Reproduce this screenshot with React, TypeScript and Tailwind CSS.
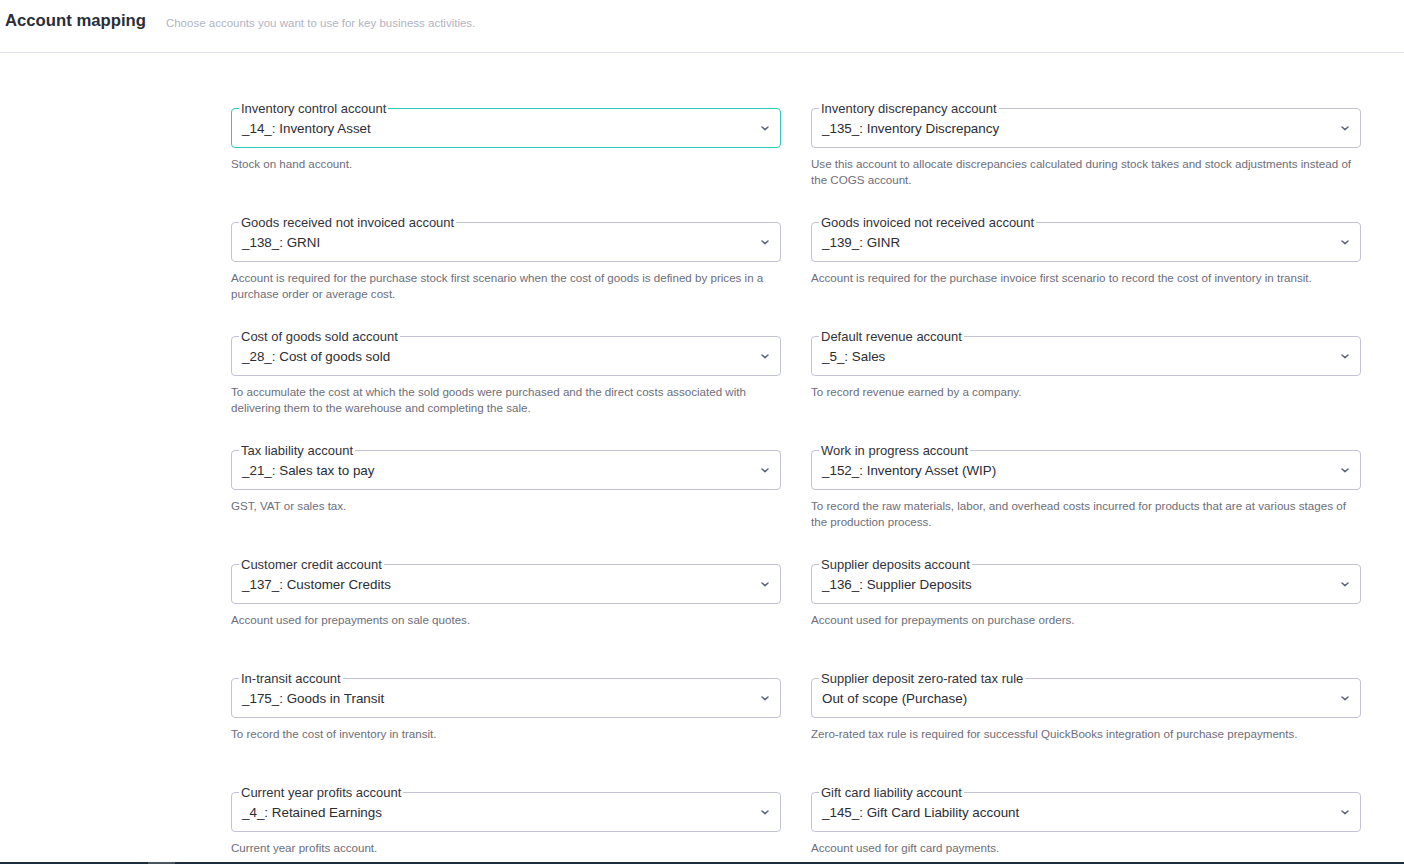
import React from 'react';

interface Mapping {
  label: string;
  value: string;
  help: string;
}

const left: Mapping[] = [
  { label: 'Inventory control account', value: '_14_: Inventory Asset', help: 'Stock on hand account.' },
  {
    label: 'Goods received not invoiced account',
    value: '_138_: GRNI',
    help: 'Account is required for the purchase stock first scenario when the cost of goods is defined by prices in a purchase order or average cost.',
  },
  {
    label: 'Cost of goods sold account',
    value: '_28_: Cost of goods sold',
    help: 'To accumulate the cost at which the sold goods were purchased and the direct costs associated with delivering them to the warehouse and completing the sale.',
  },
  { label: 'Tax liability account', value: '_21_: Sales tax to pay', help: 'GST, VAT or sales tax.' },
  { label: 'Customer credit account', value: '_137_: Customer Credits', help: 'Account used for prepayments on sale quotes.' },
  { label: 'In-transit account', value: '_175_: Goods in Transit', help: 'To record the cost of inventory in transit.' },
  { label: 'Current year profits account', value: '_4_: Retained Earnings', help: 'Current year profits account.' },
];

const right: Mapping[] = [
  {
    label: 'Inventory discrepancy account',
    value: '_135_: Inventory Discrepancy',
    help: 'Use this account to allocate discrepancies calculated during stock takes and stock adjustments instead of the COGS account.',
  },
  {
    label: 'Goods invoiced not received account',
    value: '_139_: GINR',
    help: 'Account is required for the purchase invoice first scenario to record the cost of inventory in transit.',
  },
  { label: 'Default revenue account', value: '_5_: Sales', help: 'To record revenue earned by a company.' },
  {
    label: 'Work in progress account',
    value: '_152_: Inventory Asset (WIP)',
    help: 'To record the raw materials, labor, and overhead costs incurred for products that are at various stages of the production process.',
  },
  { label: 'Supplier deposits account', value: '_136_: Supplier Deposits', help: 'Account used for prepayments on purchase orders.' },
  {
    label: 'Supplier deposit zero-rated tax rule',
    value: 'Out of scope (Purchase)',
    help: 'Zero-rated tax rule is required for successful QuickBooks integration of purchase prepayments.',
  },
  { label: 'Gift card liability account', value: '_145_: Gift Card Liability account', help: 'Account used for gift card payments.' },
];

const Chevron = () => (
  <svg width="8" height="5" viewBox="0 0 8 5" fill="none">
    <path d="M1 1l3 2.6L7 1" stroke="#5b6478" strokeWidth="1.5" strokeLinecap="round" strokeLinejoin="round" />
  </svg>
);

// outlined select with the label notched into the top border
const Field = ({ item, focused }: { item: Mapping; focused?: boolean }) => (
  <div className="h-[114px] flex flex-col">
    <div
      className={`relative h-10 shrink-0 rounded-[4px] border pl-[10px] pr-[11px] flex items-center ${
        focused ? 'border-[#2ec8b8]' : 'border-[#c2c3d4]'
      }`}
    >
      <span className="absolute -top-[8px] left-[7px] bg-white px-[2px] text-[13px] leading-[16px] text-[#33333d]">
        {item.label}
      </span>
      <div className="flex-1 pt-[3px] text-[13.4px] text-[#2c2c35]">{item.value}</div>
      <div className="pt-[1px]">
        <Chevron />
      </div>
    </div>
    <p className="mt-[8px] text-[11.6px] leading-[16px] text-[#6e6e7a]">{item.help}</p>
  </div>
);

const App: React.FC = () => {
  return (
    <div className="h-screen flex flex-col bg-white font-['Liberation_Sans',sans-serif] overflow-hidden">
      <div className="h-[53px] shrink-0 border-b border-[#e2e2ea] flex items-start pt-[9px] pl-[5px]">
        <h1 className="text-[16.7px] font-bold text-[#2a2e38] leading-[24px]">Account mapping</h1>
        <span className="ml-[20px] mt-[6px] text-[11.5px] text-[#b3b4c4]">
          Choose accounts you want to use for key business activities.
        </span>
      </div>
      <div className="flex-1 overflow-hidden pt-[55px] pl-[231px]">
        <div className="grid grid-cols-[550px_550px] gap-x-[30px]">
          <div>
            {left.map((m, i) => (
              <Field key={m.label} item={m} focused={i === 0} />
            ))}
          </div>
          <div>
            {right.map((m) => (
              <Field key={m.label} item={m} />
            ))}
          </div>
        </div>
      </div>
      <div className="h-[2px] shrink-0 bg-[#1e2d3a] flex">
        <div className="ml-[148px] w-[27px] bg-[#4a5560]" />
      </div>
    </div>
  );
};

export default App;
